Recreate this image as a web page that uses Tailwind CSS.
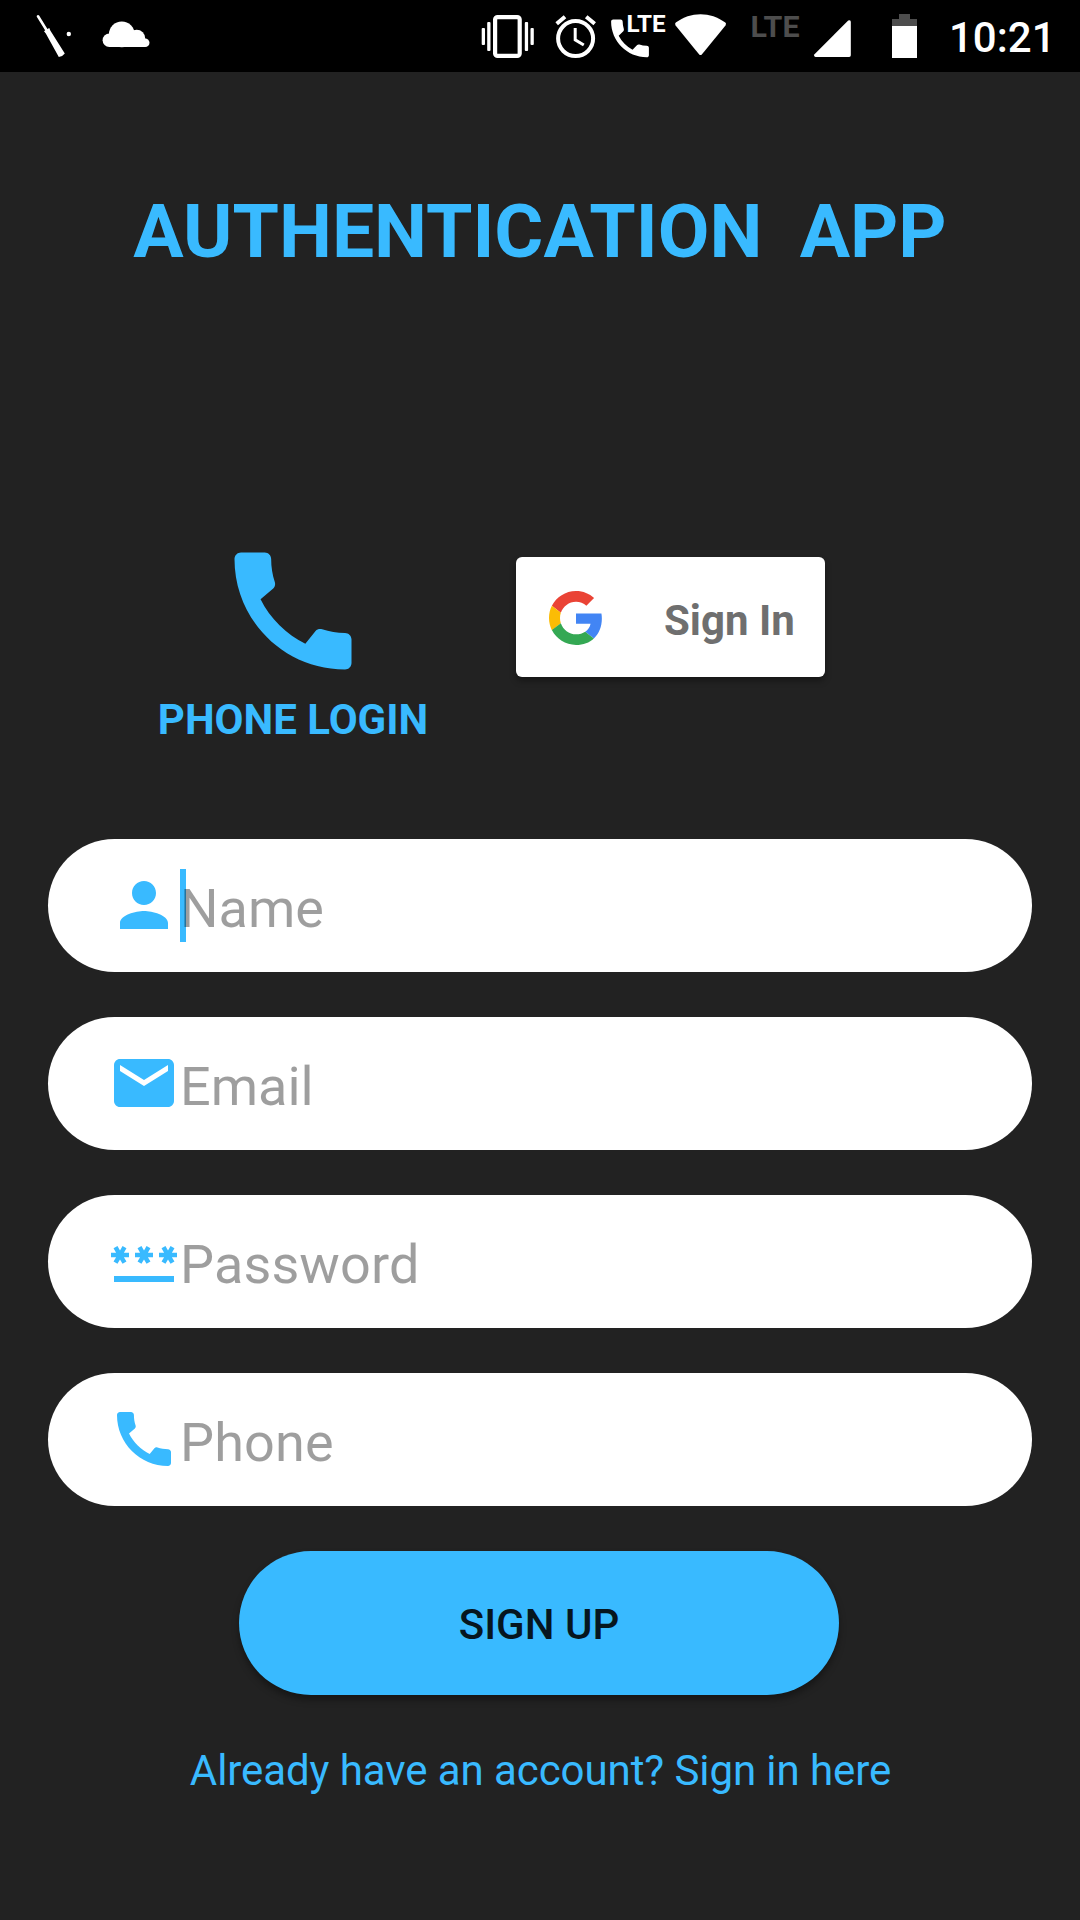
<!DOCTYPE html>
<html lang="en">
<head>
<meta charset="utf-8">
<title>Authentication App</title>
<script src="https://cdn.jsdelivr.net/npm/@tailwindcss/browser@4"></script>
</head>
<body class="bg-[#222222]">
<div class="flex h-[1920px] w-[1080px] flex-col overflow-hidden bg-[#222222] font-['Roboto',sans-serif] text-[#39baff]">

  <!-- Status bar -->
  <header class="flex h-[72px] shrink-0 items-center bg-black pr-[27px] text-white">
    <svg class="h-[72px] w-[85px]" viewBox="0 0 85 72" fill="#fff">
      <path d="M38 16.3L46.5 30" stroke="#fff" stroke-width="2.6" stroke-linecap="round"/>
      <path d="M44 31.3L46 29.8L49.3 28L50.3 30.5L64.8 53.4Q62.5 56.5 58.8 57L45.8 33.5Z"/>
      <circle cx="68.8" cy="34" r="2.2"/>
    </svg>
    <svg class="h-[72px] w-[75px]" viewBox="85 0 75 72" fill="#fff">
      <circle cx="109.3" cy="40.3" r="6.7"/><circle cx="121.8" cy="34.4" r="12.9"/><circle cx="136.7" cy="38.3" r="8.5"/><circle cx="145.2" cy="42.7" r="4.3"/><path d="M109 38H145V47H109Z"/>
    </svg>
    <div class="flex-1"></div>
    <svg class="h-[72px] w-[70px]" viewBox="475 0 70 72" fill="#fff">
      <rect x="495.1" y="17.1" width="24.6" height="38.8" rx="2.5" fill="none" stroke="#fff" stroke-width="4.2"/>
      <rect x="487.2" y="22" width="3.3" height="29" rx="1"/><rect x="481.7" y="28" width="3.3" height="17" rx="1"/>
      <rect x="524.8" y="22" width="3.3" height="29" rx="1"/><rect x="530.5" y="28" width="3.3" height="17" rx="1"/>
    </svg>
    <svg class="h-[72px] w-[60px]" viewBox="545 0 60 72" fill="none" stroke="#fff" stroke-width="4">
      <circle cx="575.6" cy="38.6" r="17.5"/><path d="M556.7 23.7L565 16.8M586.2 16.8L594.7 23.7"/><path d="M575.2 28V39.8L583.8 45" stroke-width="3"/>
    </svg>
    <svg class="h-[72px] w-[65px]" viewBox="605 0 65 72" fill="#fff">
      <path transform="translate(604.8 13.2) scale(2.1)" d="M6.62 10.79c1.44 2.83 3.76 5.14 6.59 6.59l2.2-2.2c.27-.27.67-.36 1.02-.24 1.12.37 2.33.57 3.57.57.55 0 1 .45 1 1V20c0 .55-.45 1-1 1-9.39 0-17-7.61-17-17 0-.55.45-1 1-1h3.5c.55 0 1 .45 1 1 0 1.25.2 2.45.57 3.57.11.35.03.74-.25 1.02l-2.2 2.2z"/>
      <text x="626.5" y="32" font-size="23" font-weight="700" textLength="39" lengthAdjust="spacingAndGlyphs">LTE</text>
    </svg>
    <svg class="h-[72px] w-[65px]" viewBox="670 0 65 72" fill="#fff">
      <path d="M675.6 25.4Q674.4 23.8 675.8 22.6C690.5 11.4 710.5 11.4 725.3 22.6Q726.7 23.8 725.5 25.4L702 54.2Q700.5 56 699 54.2Z"/>
    </svg>
    <svg class="h-[72px] w-[70px]" viewBox="735 0 70 72" fill="#4d4d4d">
      <text x="750.5" y="37" font-size="29.5" font-weight="700" textLength="49" lengthAdjust="spacingAndGlyphs">LTE</text>
    </svg>
    <svg class="h-[72px] w-[65px]" viewBox="805 0 65 72" fill="#fff">
      <path d="M814.5 54.3L848.2 20.6Q850.8 19.4 850.8 22V55.3Q850.8 57 849.2 57H815.6Q813.2 56.2 814.5 54.3Z"/>
    </svg>
    <svg class="h-[72px] w-[60px]" viewBox="870 0 60 72" fill="#fff">
      <path fill="#4d4d4d" d="M892 26V19H899V14H910V19H917V26Z"/><path d="M892 26H917V58H892Z"/>
    </svg>
    <span class="-mr-px ml-[19px] w-[105px] pt-[3px] text-right text-[42px] leading-[48px] font-medium">10:21</span>
  </header>

  <h1 class="mt-[115px] h-[88px] text-center text-[75px] leading-[88px] font-bold whitespace-pre">AUTHENTICATION  APP</h1>

  <!-- Alternative sign-in methods -->
  <section class="mt-[257px] flex items-start pl-[143px]">
    <div class="flex w-[300px] flex-col items-center pt-px">
      <svg class="h-[156px] w-[156px]" viewBox="0 0 24 24" fill="currentColor"><path d="M20.01 15.38c-1.23 0-2.42-.2-3.53-.56-.35-.12-.74-.03-1.01.24l-1.57 1.97c-2.83-1.35-5.48-3.9-6.89-6.83l1.95-1.66c.27-.28.35-.67.24-1.02-.37-1.11-.56-2.3-.56-3.53 0-.54-.45-.99-.99-.99H4c-.55 0-1 .45-1 1C3 13.4 10.6 21 20 21c.55 0 1-.45 1-1v-3.63c0-.54-.45-.99-.99-.99z"/></svg>
      <span class="mt-[7px] text-[42px] leading-[48px] font-bold whitespace-nowrap">PHONE LOGIN</span>
    </div>
    <button class="mt-[25px] ml-[73px] flex h-[120px] w-[309px] items-center rounded-[6px] bg-white pl-[33px] shadow-[0_4px_6px_rgba(0,0,0,0.35)]">
      <svg class="mt-0.5 h-[54px] w-[54px]" viewBox="0 0 48 48">
        <path fill="#EA4335" d="M24 9.5c3.54 0 6.71 1.22 9.21 3.6l6.85-6.85C35.9 2.38 30.47 0 24 0 14.62 0 6.51 5.38 2.56 13.22l7.98 6.19C12.43 13.72 17.74 9.5 24 9.5z"/>
        <path fill="#4285F4" d="M46.98 24.55c0-1.57-.15-3.09-.38-4.55H24v9.02h12.94c-.58 2.96-2.26 5.48-4.78 7.18l7.73 6c4.51-4.18 7.09-10.36 7.09-17.65z"/>
        <path fill="#FBBC05" d="M10.53 28.59c-.48-1.45-.76-2.99-.76-4.59s.27-3.14.76-4.59l-7.98-6.19C.92 16.46 0 20.12 0 24c0 3.88.92 7.54 2.56 10.78l7.97-6.19z"/>
        <path fill="#34A853" d="M24 48c6.48 0 11.93-2.13 15.89-5.81l-7.73-6c-2.15 1.45-4.92 2.3-8.16 2.3-6.26 0-11.57-4.22-13.47-9.91l-7.98 6.19C6.51 42.62 14.62 48 24 48z"/>
      </svg>
      <span class="ml-[61px] pt-[7px] text-[42px] leading-[48px] font-bold text-[#6f6f6f]">Sign In</span>
    </button>
  </section>

  <!-- Sign-up form -->
  <form class="mt-[95px] flex flex-col gap-[45px] px-12">
    <label class="flex h-[133px] items-center rounded-full bg-white pl-[60px]">
      <svg class="mb-0.5 h-[72px] w-[72px]" viewBox="0 0 24 24" fill="currentColor"><path d="M12 12c2.21 0 4-1.79 4-4s-1.79-4-4-4-4 1.79-4 4 1.79 4 4 4zm0 2c-2.67 0-8 1.34-8 4v2h16v-2c0-2.66-5.33-4-8-4z"/></svg>
      <span class="relative flex h-full items-center">
        <span class="absolute top-[30px] left-0 h-[73px] w-[6px] bg-[#39baff]"></span>
        <input type="text" placeholder="Name" class="relative w-[700px] pt-1.5 text-[54px] leading-[64px] text-black outline-none placeholder:text-black/38">
      </span>
    </label>
    <label class="flex h-[133px] items-center rounded-full bg-white pl-[60px]">
      <svg class="mb-0.5 h-[72px] w-[72px]" viewBox="0 0 24 24" fill="currentColor"><path d="M20 4H4c-1.1 0-1.99.9-1.99 2L2 18c0 1.1.9 2 2 2h16c1.1 0 2-.9 2-2V6c0-1.1-.9-2-2-2zm0 4l-8 5-8-5V6l8 5 8-5v2z"/></svg>
      <input type="email" placeholder="Email" class="w-[700px] pt-1.5 text-[54px] leading-[64px] text-black outline-none placeholder:text-black/38">
    </label>
    <label class="flex h-[133px] items-center rounded-full bg-white pl-[60px]">
      <svg class="mb-0.5 h-[72px] w-[72px]" viewBox="0 0 24 24" fill="currentColor"><path d="M2 17h20v2H2v-2zm1.15-4.05L4 11.47l.85 1.48 1.3-.75-.85-1.48H7v-1.5H5.3l.85-1.47L4.85 7 4 8.47 3.15 7l-1.3.75.85 1.47H1v1.5h1.7l-.85 1.48 1.3.75zm6.7-.75l1.3.75.85-1.48.85 1.48 1.3-.75-.85-1.48H15v-1.5h-1.7l.85-1.47-1.3-.75L12 8.47 11.15 7l-1.3.75.85 1.47H9v1.5h1.7l-.85 1.48zM23 9.22h-1.7l.85-1.47-1.3-.75L20 8.47 19.15 7l-1.3.75.85 1.47H17v1.5h1.7l-.85 1.48 1.3.75.85-1.48.85 1.48 1.3-.75-.85-1.48H23v-1.5z"/></svg>
      <input type="password" placeholder="Password" class="w-[700px] pt-1.5 text-[54px] leading-[64px] tracking-[0.12px] text-black outline-none placeholder:text-black/38">
    </label>
    <label class="flex h-[133px] items-center rounded-full bg-white pl-[60px]">
      <svg class="mb-0.5 h-[72px] w-[72px]" viewBox="0 0 24 24" fill="currentColor"><path d="M20.01 15.38c-1.23 0-2.42-.2-3.53-.56-.35-.12-.74-.03-1.01.24l-1.57 1.97c-2.83-1.35-5.48-3.9-6.89-6.83l1.95-1.66c.27-.28.35-.67.24-1.02-.37-1.11-.56-2.3-.56-3.53 0-.54-.45-.99-.99-.99H4c-.55 0-1 .45-1 1C3 13.4 10.6 21 20 21c.55 0 1-.45 1-1v-3.63c0-.54-.45-.99-.99-.99z"/></svg>
      <input type="tel" placeholder="Phone" class="w-[700px] pt-1.5 text-[54px] leading-[64px] tracking-[0.12px] text-black outline-none placeholder:text-black/38">
    </label>
    <button type="button" class="ml-[191px] h-[144px] w-[600px] rounded-full bg-[#39baff] pt-[3px] text-[42px] leading-[48px] font-medium text-[#06161f] shadow-[0_5px_7px_rgba(0,0,0,0.35)]">SIGN UP</button>
  </form>

  <a class="mt-[52px] pl-px text-center text-[42px] leading-[48px] tracking-[-0.08px]">Already have an account? Sign in here</a>
</div>
</body>
</html>
